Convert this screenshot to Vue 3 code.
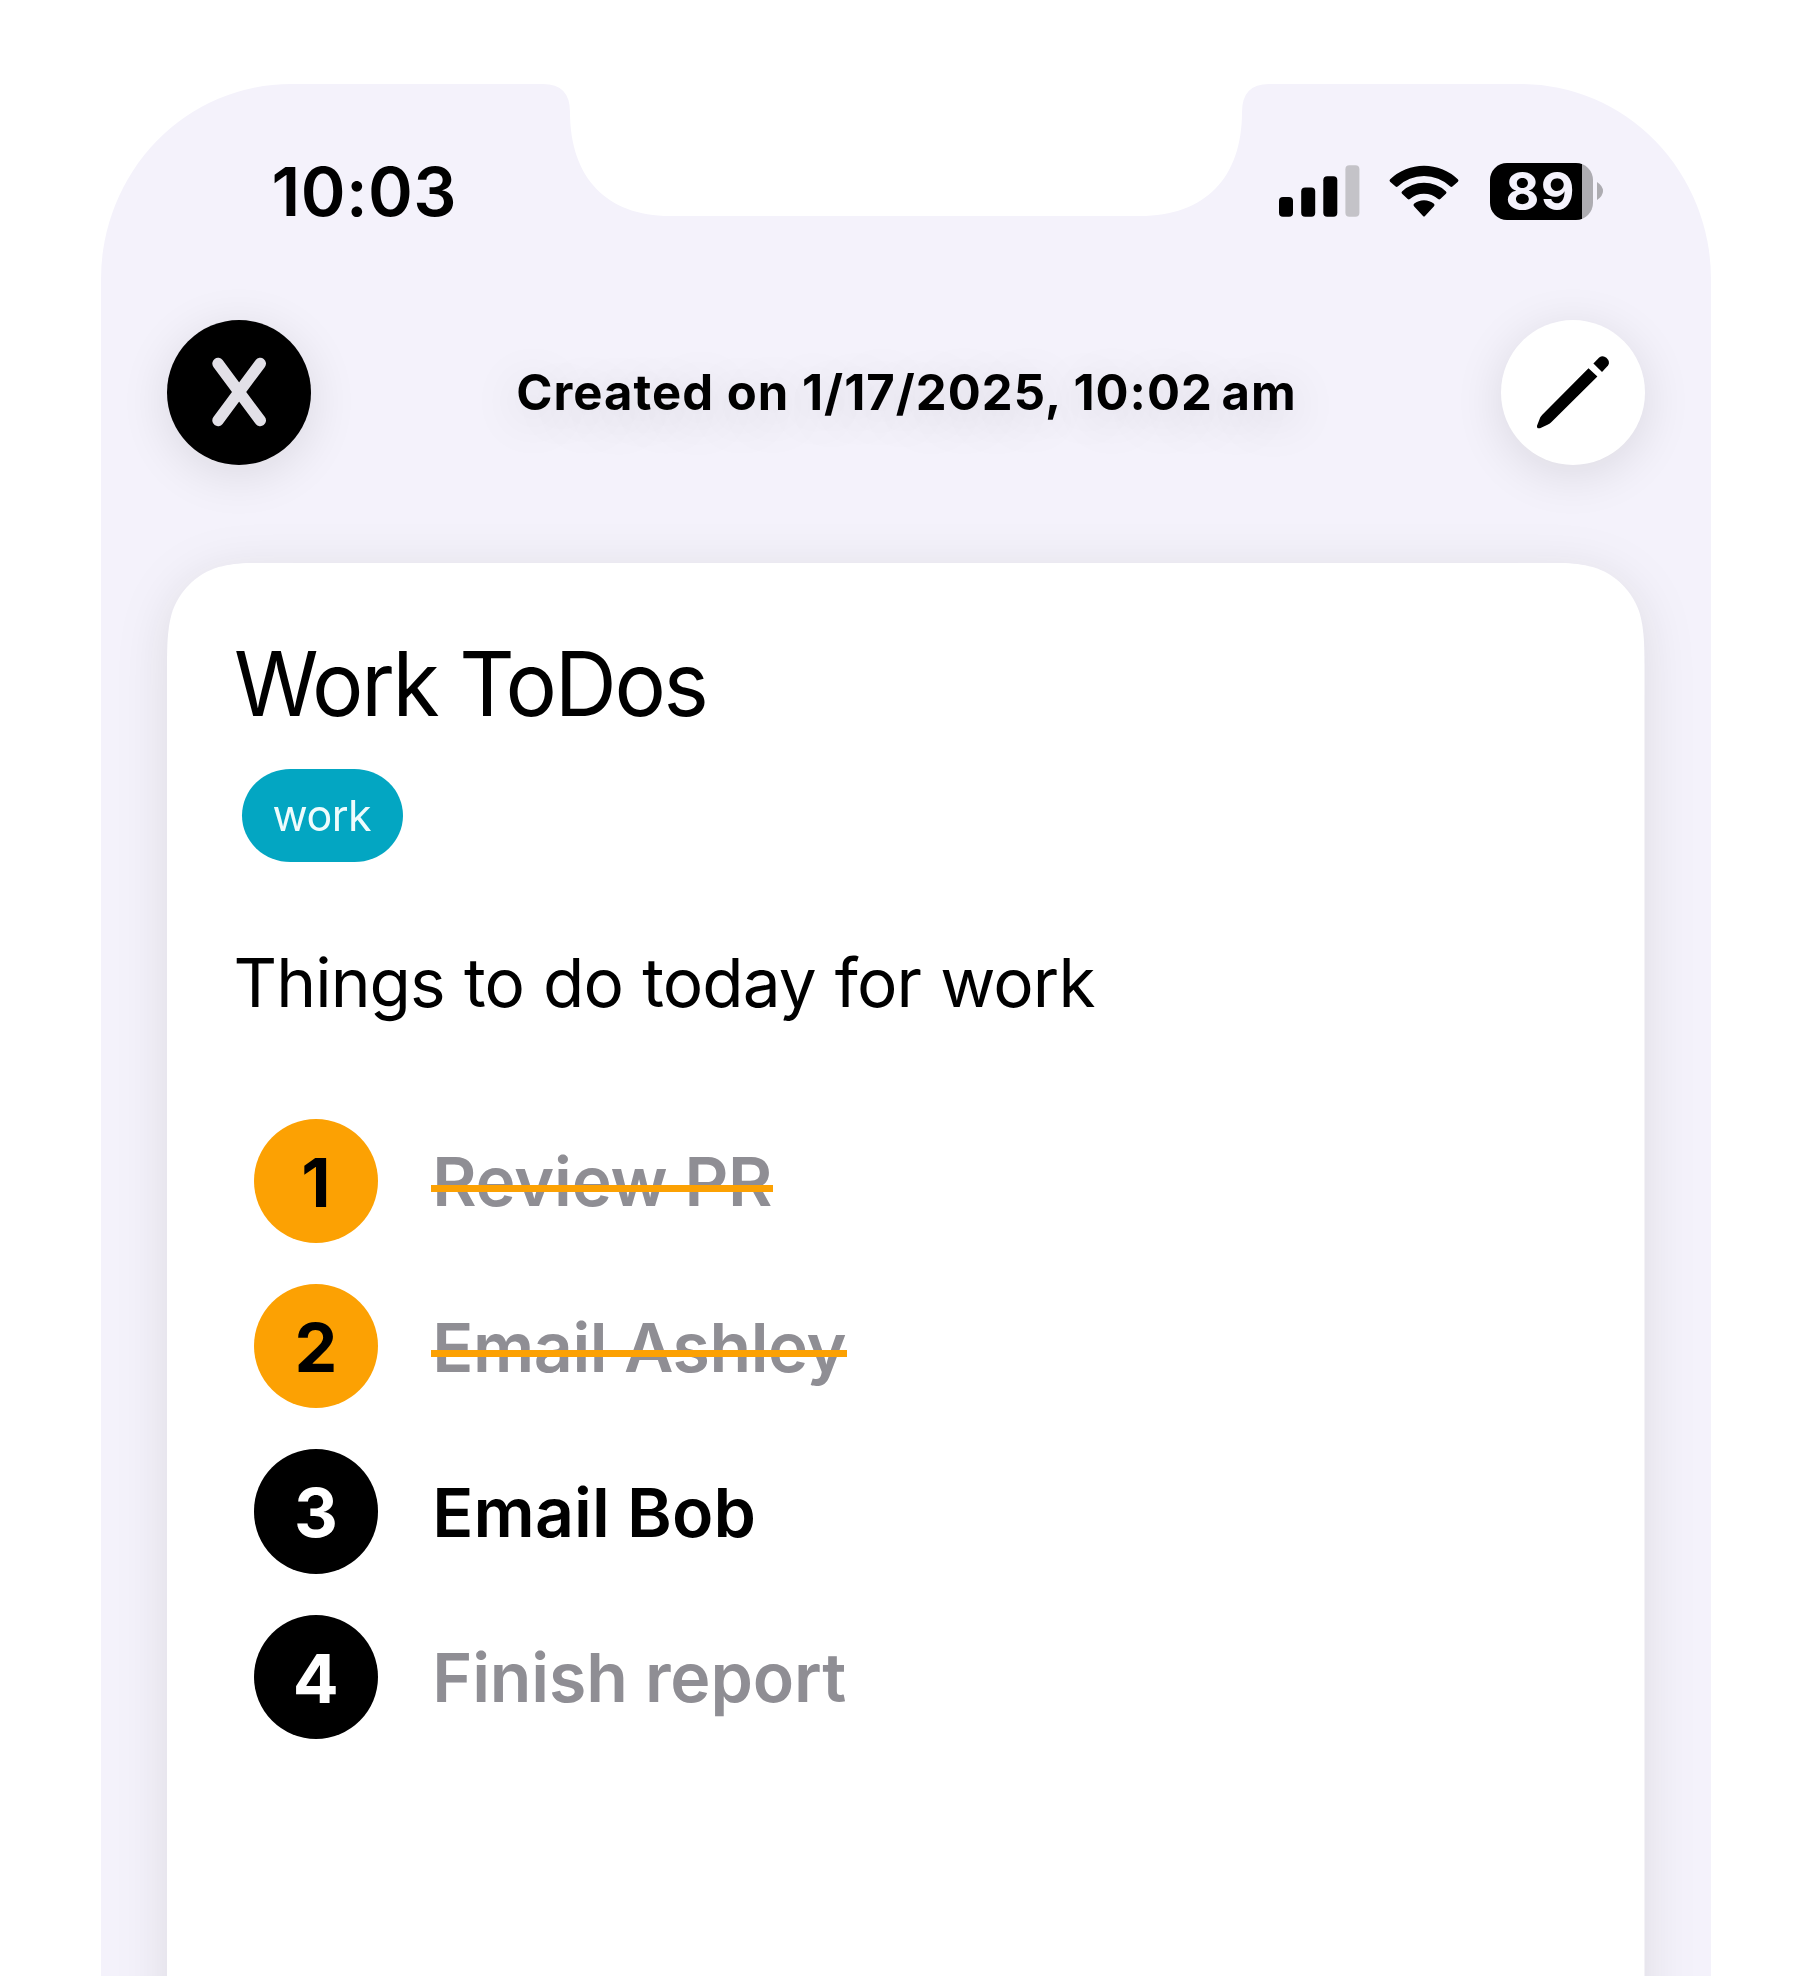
<script setup>
const bars = [
  { x: 0, h: 19.7 },
  { x: 22.2, h: 29.3 },
  { x: 44.3, h: 40.5 },
  { x: 66.4, h: 51.5, dim: true },
]

const tasks = [
  { n: 1, label: 'Review PR', state: 'done', spacing: -0.2 },
  { n: 2, label: 'Email Ashley', state: 'done', spacing: -0.42 },
  { n: 3, label: 'Email Bob', state: 'active', spacing: 0.1 },
  { n: 4, label: 'Finish report', state: 'pending', spacing: -0.1 },
]
</script>

<template>
  <div class="page">
    <main class="screen">
      <header class="status">
        <div class="time">10:03</div>
        <div class="indicators">
          <svg class="signal" width="81" height="52" viewBox="0 0 81 52">
            <rect
              v-for="b in bars"
              :key="b.x"
              :x="b.x"
              :y="51.7 - b.h"
              width="14"
              :height="b.h"
              rx="4"
              :fill="b.dim ? '#c4c3c8' : '#000'"
            />
          </svg>
          <svg class="wifi" width="70" height="52" viewBox="0 0 70 52">
            <path d="M1.2 14.2Q0 15.4 1.1 16.7L6.6 21.6Q7.6 22.4 8.7 21.5A38.5 38.5 0 0 1 61.3 21.5Q62.4 22.4 63.4 21.6L68.9 16.7Q70 15.4 68.8 14.2A49 49 0 0 0 1.2 14.2Z" />
            <path d="M13 26.4Q11.9 27.6 13.1 28.8L18.7 34Q19.8 34.8 20.9 33.9A21.6 21.6 0 0 1 49.1 33.9Q50.2 34.8 51.3 34L56.9 28.8Q58.1 27.6 57 26.4A32.5 32.5 0 0 0 13 26.4Z" />
            <path d="M25 38.8Q23.9 40 25 41.2L34 50.9Q35 52 36 50.9L45 41.2Q46.1 40 45 38.8A15.8 15.8 0 0 0 25 38.8Z" />
          </svg>
          <div class="battery">
            <div class="level">89</div>
            <svg class="cap" width="6" height="18" viewBox="0 0 6 18">
              <path d="M0 0Q6 4 6 9T0 18Z" fill="#adacb1" />
            </svg>
          </div>
        </div>
      </header>

      <nav class="toolbar">
        <button class="round close" aria-label="Close">
          <svg width="144" height="145" viewBox="0 0 144 145">
            <path d="M51 43.5L93.3 100.5M93.3 43.5L51 100.5" stroke="#e2e0e7" stroke-width="11.4" stroke-linecap="round" />
          </svg>
        </button>
        <p class="created">Created on 1/17/2025, 10:02<span>am</span></p>
        <button class="round edit" aria-label="Edit">
          <svg width="144" height="145" viewBox="0 0 144 145">
            <path d="M87.5 48.2L96.4 56.6L50 102.6Q48.5 104 46.5 104.8L39 108.2Q35.6 109 36 105.8L39.2 97.6Q39.9 96 41.3 94.7Z" />
            <path d="M92.4 43.6L98.2 37.6Q101.8 34.6 105.4 37.8Q109.6 42 107 45.6L101 51.9Z" />
          </svg>
        </button>
      </nav>

      <section class="card">
        <h1>Work ToDos</h1>
        <span class="tag">work</span>
        <p class="body">Things to do today for work</p>
        <ol>
          <li v-for="t in tasks" :key="t.n" :class="t.state">
            <span class="num">{{ t.n }}</span>
            <span class="label" :style="{ letterSpacing: t.spacing + 'px' }">{{ t.label }}</span>
          </li>
        </ol>
      </section>
    </main>
    <svg class="notch" width="700" height="133" viewBox="0 0 700 133">
      <path d="M0 0V1H-12Q15 1 15 29C15 95 52 133 115 133H585C650 133 687 95 687 29Q687 1 714 1V0Z" fill="#fff" />
    </svg>
  </div>
</template>

<style>
body {
  margin: 0;
  background: #fff;
}
</style>

<style scoped>
.page {
  position: relative;
  box-sizing: border-box;
  width: 1811px;
  height: 1976px;
  padding: 84px 100px 0 101px;
  overflow: hidden;
  background: #fff;
  color: #000;
  font-family: Inter, 'Liberation Sans', sans-serif;
}
.screen {
  box-sizing: border-box;
  height: 1892px;
  padding: 0 66px;
  overflow: hidden;
  border-radius: 190px 190px 0 0 / 195px 195px 0 0;
  background: #f4f2fb;
}
.notch {
  position: absolute;
  left: 555px;
  top: 83px;
  overflow: visible;
}
.status {
  display: flex;
  justify-content: space-between;
  align-items: center;
  height: 68px;
  margin-top: 73px;
  padding: 0 42px 0 104.5px;
}
.time {
  font-size: 68px;
  font-weight: 600;
  line-height: 68px;
  letter-spacing: 0.4px;
}
.indicators {
  display: flex;
  align-items: center;
}
.signal {
  margin-right: 29.5px;
}
.wifi {
  margin-right: 30.5px;
}
.battery {
  display: flex;
  align-items: center;
  gap: 4px;
}
.level {
  box-sizing: border-box;
  width: 103.5px;
  height: 57px;
  padding-left: 16px;
  border-radius: 17px;
  background: linear-gradient(90deg, #000 92.3px, #adacb1 92.3px);
  color: #f4f2fc;
  font-size: 52px;
  font-weight: 700;
  line-height: 57px;
  letter-spacing: 1.4px;
}
.toolbar {
  display: flex;
  justify-content: space-between;
  align-items: center;
  margin-top: 94.5px;
}
.round {
  width: 144px;
  height: 145px;
  padding: 0;
  border: 0;
  border-radius: 50%;
  background: #fff;
  box-shadow: 0 9px 50px rgba(20, 20, 0, 0.11);
}
.round svg {
  display: block;
}
.close {
  background: #000;
}
.created {
  margin: 0;
  font-size: 49px;
  font-weight: 700;
  line-height: 60px;
  letter-spacing: 1.02px;
  text-shadow: 0 9px 50px rgba(20, 20, 0, 0.2);
  transform: translate(0.5px, 1px);
}
.created span {
  margin-left: 8.5px;
}
.card {
  position: relative;
  z-index: 0;
  box-sizing: border-box;
  width: 1477.5px;
  height: 1600px;
  margin-top: 98px;
  padding: 69px 69px 0;
  border-radius: 76px;
  filter: drop-shadow(0 9px 25px rgba(20, 20, 0, 0.105));
}
.card::before {
  content: '';
  position: absolute;
  inset: 0;
  z-index: -1;
  background: #fff;
  clip-path: path('M116 0H1361.5C1394.8 0 1411.5 0 1429.5 5.7C1449.1 12.8 1464.7 28.4 1471.8 48C1477.5 66 1477.5 82.7 1477.5 116V1600H0V116C0 82.7 0 66 5.7 48C12.8 28.4 28.4 12.8 48 5.7C66 0 82.7 0 116 0Z');
}
h1 {
  margin: 0 0 0 -2.5px;
  font-size: 89px;
  font-weight: 400;
  line-height: 104px;
  letter-spacing: -2.4px;
  transform: scaleX(0.965);
  transform-origin: left;
}
.tag {
  display: block;
  box-sizing: border-box;
  width: 161.5px;
  height: 93.5px;
  margin: 33px 0 0 5.5px;
  padding-left: 31px;
  border-radius: 49px / 47px;
  background: #03a6c2;
  color: #effcfd;
  font-size: 43px;
  font-weight: 400;
  line-height: 93px;
  letter-spacing: -0.5px;
}
.body {
  margin: 80.5px 0 0 -2.5px;
  font-size: 67.5px;
  font-weight: 400;
  line-height: 80px;
  letter-spacing: -0.9px;
  word-spacing: 1px;
  white-space: nowrap;
}
ol {
  display: flex;
  flex-direction: column;
  gap: 41px;
  margin: 96.3px 0 0;
  padding: 0 0 0 17.7px;
  list-style: none;
}
li {
  display: flex;
  align-items: center;
  gap: 52.3px;
  height: 124.3px;
}
.num {
  width: 124.3px;
  height: 124.3px;
  border-radius: 50%;
  background: #000;
  color: #fff;
  font-size: 68px;
  font-weight: 700;
  line-height: 126px;
  text-align: center;
}
.label {
  position: relative;
  padding: 1px 2px 0;
  color: #8f8e94;
  font-size: 68px;
  font-weight: 600;
  line-height: 80px;
}
.done .num {
  background: #fca103;
  color: #000;
}
.active .label {
  color: #000;
}
.done .label::after {
  content: '';
  position: absolute;
  left: 1px;
  right: 1px;
  top: 44.2px;
  height: 7px;
  background: #fca103;
}
</style>
